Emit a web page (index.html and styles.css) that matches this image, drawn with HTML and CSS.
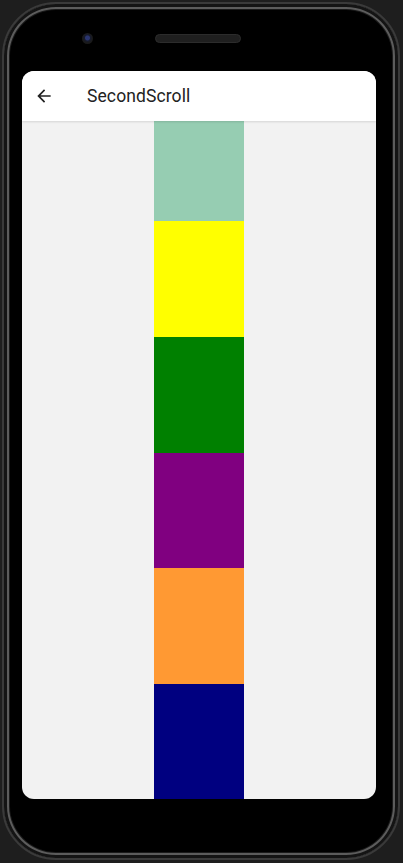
FILE: index.html
```html
<!DOCTYPE html>
<html lang="en">
<head>
<meta charset="utf-8">
<title>SecondScroll</title>
<link rel="stylesheet" href="styles.css">
</head>
<body>
<div class="phone">
  <div class="bezel-top">
    <span class="camera"></span>
    <span class="speaker"></span>
  </div>
  <div class="screen">
    <header class="appbar">
      <svg class="back" viewBox="0 0 24 24" width="24" height="24" aria-hidden="true">
        <path d="M20 11H7.83l5.59-5.59L12 4l-8 8 8 8 1.41-1.41L7.83 13H20v-2z" fill="#222"/>
      </svg>
      <span class="title">SecondScroll</span>
    </header>
    <main class="content">
      <div class="column">
        <div class="box mint"></div>
        <div class="box yellow"></div>
        <div class="box green"></div>
        <div class="box purple"></div>
        <div class="box orange"></div>
        <div class="box navy"></div>
      </div>
    </main>
  </div>
</div>
</body>
</html>
```

FILE: styles.css
```css
html, body {
  margin: 0;
  padding: 0;
}
body {
  background: #1e1e1e;
  width: 403px;
  height: 863px;
  overflow: hidden;
  padding: 2px 3px 0 2px;
  box-sizing: border-box;
  font-family: Roboto, "Noto Sans", sans-serif;
}
.phone {
  width: 398px;
  height: 858px;
  box-sizing: border-box;
  background: #000;
  border: 2px solid #3a3a3a;
  border-radius: 54px;
  box-shadow: inset 0 0 0 3px #141414, inset 0 0 0 5px #5c5c5c, inset 0 0 0 6px #1a1a1a;
  padding: 0 21px 0 18px;
  display: flex;
  flex-direction: column;
}
.bezel-top {
  height: 67px;
  flex: none;
  display: flex;
  align-items: flex-start;
  padding-top: 26px;
  box-sizing: border-box;
}
.camera {
  width: 11px;
  height: 11px;
  border-radius: 50%;
  background: radial-gradient(circle at 50% 45%, #2a3570 0 2px, #161a2c 3px, #1a1a1a 5px);
  margin-left: 60px;
  margin-top: 3px;
}
.speaker {
  width: 86px;
  height: 9px;
  border-radius: 5px;
  background: #1f1f1f;
  border: 1px solid #2c2c2c;
  box-sizing: border-box;
  margin-left: 62px;
  margin-top: 4px;
}
.screen {
  width: 354px;
  height: 728px;
  border-radius: 12px;
  overflow: hidden;
  background: #f2f2f2;
  display: flex;
  flex-direction: column;
}
.appbar {
  height: 50px;
  flex: none;
  background: #fff;
  display: flex;
  align-items: center;
  padding-left: 12px;
  box-shadow: 0 1px 2px rgba(0,0,0,0.12);
  position: relative;
  z-index: 1;
}
.back {
  width: 20px;
  height: 20px;
}
.title {
  margin-left: 33px;
  font-size: 17.5px;
  font-weight: 400;
  color: #222;
  letter-spacing: 0.1px;
}
.content {
  flex: 1;
  display: flex;
  justify-content: center;
  overflow: hidden;
}
.column {
  width: 90px;
  display: flex;
  flex-direction: column;
}
.box {
  height: 116px;
  flex: none;
}
.mint { height: 100px; background: #96cdb2; }
.yellow { background: #ffff00; }
.green { background: #008000; }
.purple { background: #800080; height: 115px; }
.orange { background: #ff9933; }
.navy { background: #000080; }
```
